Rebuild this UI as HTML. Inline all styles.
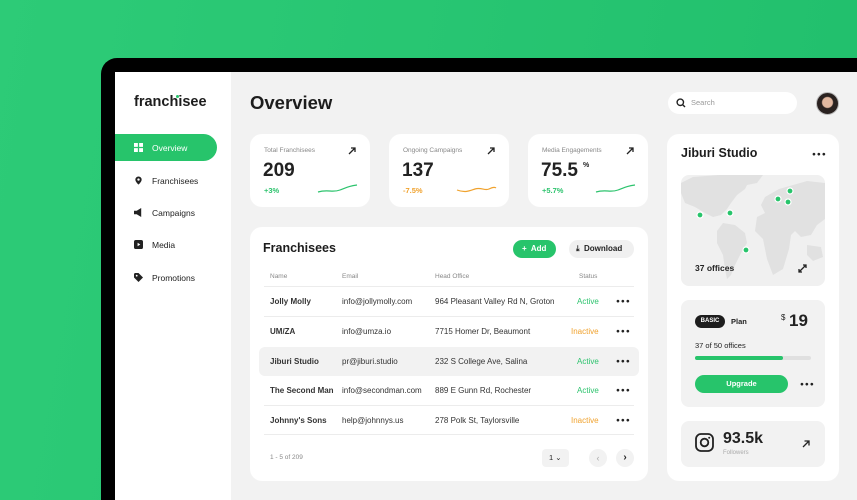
<!DOCTYPE html>
<html><head><meta charset="utf-8"><style>
*{margin:0;padding:0;box-sizing:border-box}
html,body{width:857px;height:500px;overflow:hidden}
body{background:linear-gradient(100deg,#2dcb77,#21bf6c);font-family:"Liberation Sans",sans-serif;position:relative;color:#222}
.abs{position:absolute}
.dev{left:101px;top:58px;width:800px;height:442px;background:#000;border-radius:16px 16px 0 0}
.scr{left:115px;top:72px;width:742px;height:428px;background:#f2f2f2}
.side{left:115px;top:72px;width:116px;height:428px;background:#fff}
.card{background:#fff;border-radius:12px}
.nav{left:115px;width:102px;height:27px;font-size:8.5px;display:flex;align-items:center;padding-left:19px;color:#222}
.nav .ic{width:9px;height:9px;margin-right:9px;display:inline-block}
.lab{font-size:6.5px;color:#888}
.big{font-size:19px;font-weight:bold;color:#222}
.row{left:259px;width:380px;height:29px;font-size:8px;display:flex;align-items:center;color:#333}
.row span{position:absolute}
.dots{font-weight:bold;font-size:6.5px;letter-spacing:1px;color:#222}
.g{color:#2cc36d}.o{color:#f0a22e}
.line{left:264px;width:370px;height:1px;background:#ececec}
</style></head><body>
<div class="abs dev"></div>
<div class="abs scr"></div>
<div class="abs side"></div>
<div class="abs" style="left:134px;top:94px;font-size:14.5px;font-weight:bold;color:#1d1d1d">franchisee</div>
<div class="abs" style="left:176px;top:95px;width:3px;height:3px;border-radius:50%;background:#27c46b"></div>
<div class="abs nav" style="top:134px;background:#27c46b;border-radius:0 14px 14px 0;color:#fff"><svg class="ic" viewBox="0 0 10 10"><rect width="4.3" height="4.3" fill="#fff"/><rect x="5.7" width="4.3" height="4.3" fill="#fff"/><rect y="5.7" width="4.3" height="4.3" fill="#fff"/><rect x="5.7" y="5.7" width="4.3" height="4.3" fill="#fff"/></svg>Overview</div>
<div class="abs nav" style="top:167px"><svg class="ic" viewBox="0 0 10 10"><path d="M5 0.5a3.5 3.5 0 0 1 3.5 3.5c0 2.5-3.5 5.5-3.5 5.5S1.5 6.5 1.5 4A3.5 3.5 0 0 1 5 .5z" fill="#222"/><circle cx="5" cy="4" r="1.3" fill="#fff"/></svg>Franchisees</div>
<div class="abs nav" style="top:199px"><svg class="ic" viewBox="0 0 10 10"><path d="M0 3h3l5-3v10L3 7H0z" fill="#222"/></svg>Campaigns</div>
<div class="abs nav" style="top:231px"><svg class="ic" viewBox="0 0 10 10"><rect width="10" height="10" rx="2" fill="#222"/><path d="M4 3l3 2-3 2z" fill="#fff"/></svg>Media</div>
<div class="abs nav" style="top:264px"><svg class="ic" viewBox="0 0 10 10"><path d="M0 1v4l5 5 5-5-5-5H1z" fill="#222"/><circle cx="3" cy="3" r="1" fill="#fff"/></svg>Promotions</div>

<div class="abs" style="left:250px;top:92px;font-size:18.5px;font-weight:bold;color:#1d1d1d">Overview</div>

<div class="abs" style="left:668px;top:92px;width:129px;height:22px;background:#fff;border-radius:11px"></div>
<svg class="abs" style="left:676px;top:98px" width="10" height="10" viewBox="0 0 10 10"><circle cx="4.3" cy="4.3" r="3.2" fill="none" stroke="#222" stroke-width="1.4"/><path d="M6.6 6.6L9 9" stroke="#222" stroke-width="1.4"/></svg>
<div class="abs" style="left:691px;top:98px;font-size:7.5px;color:#999">Search</div>
<div class="abs" style="left:816px;top:92px;width:23px;height:23px;border-radius:50%;background:radial-gradient(circle at 50% 45%,#e2b8a0 0 5px,#2a2220 6px);border:1px solid #bbb"></div>

<div class="abs card" style="left:250px;top:134px;width:120px;height:73px"></div>
<div class="abs card" style="left:389px;top:134px;width:120px;height:73px"></div>
<div class="abs card" style="left:528px;top:134px;width:120px;height:73px"></div>
<div class="abs lab" style="left:264px;top:147px">Total Franchisees</div>
<div class="abs lab" style="left:403px;top:147px">Ongoing Campaigns</div>
<div class="abs lab" style="left:542px;top:147px">Media Engagements</div>
<div class="abs big" style="left:263px;top:160px">209</div>
<div class="abs big" style="left:402px;top:160px">137</div>
<div class="abs big" style="left:541px;top:160px">75.5</div>
<div class="abs" style="left:583px;top:162px;font-size:7px;font-weight:bold">%</div>
<div class="abs g" style="left:264px;top:186px;font-size:7.5px;font-weight:bold">+3%</div>
<div class="abs o" style="left:403px;top:186px;font-size:7.5px;font-weight:bold">-7.5%</div>
<div class="abs g" style="left:542px;top:186px;font-size:7.5px;font-weight:bold">+5.7%</div>
<svg class="abs" style="left:0;top:0" width="857" height="500">
<g stroke="#222" stroke-width="1.3" fill="none"><path d="M349 154l6-6M351 148h4v4"/><path d="M488 154l6-6M490 148h4v4"/><path d="M627 154l6-6M629 148h4v4"/></g>
<path d="M318 192c10-3 14 1 22-2s10-4 17-5" stroke="#2cc36d" stroke-width="1.2" fill="none"/>
<path d="M457 190c8 3 12 1 18-1s10 2 14 0 6-2 7-1" stroke="#f0a22e" stroke-width="1.2" fill="none"/>
<path d="M596 192c10-3 14 1 22-2s10-4 17-5" stroke="#2cc36d" stroke-width="1.2" fill="none"/>
</svg>

<div class="abs card" style="left:250px;top:227px;width:398px;height:254px"></div>
<div class="abs" style="left:263px;top:241px;font-size:12.5px;font-weight:bold;color:#1d1d1d">Franchisees</div>
<div class="abs" style="left:513px;top:240px;width:43px;height:18px;border-radius:9px;background:#27c46b;color:#fff;font-size:8px;font-weight:bold;line-height:18px;padding-left:9px">+&nbsp; Add</div>
<div class="abs" style="left:569px;top:240px;width:65px;height:18px;border-radius:9px;background:#f0f0f0;font-size:8px;font-weight:bold;line-height:18px;padding-left:7px">⤓&nbsp; Download</div>
<div class="abs lab" style="left:270px;top:273px">Name</div>
<div class="abs lab" style="left:342px;top:273px">Email</div>
<div class="abs lab" style="left:435px;top:273px">Head Office</div>
<div class="abs lab" style="left:579px;top:273px">Status</div>
<div class="abs line" style="top:286px"></div>
<div class="abs line" style="top:316px"></div>
<div class="abs line" style="top:405px"></div>
<div class="abs line" style="top:434px"></div>
<div class="abs" style="left:259px;top:347px;width:380px;height:29px;background:#f2f2f2;border-radius:6px"></div>
<div class="abs row" style="top:287px"><span style="left:11px;font-weight:bold">Jolly Molly</span><span style="left:83px">info@jollymolly.com</span><span style="left:176px">964 Pleasant Valley Rd N, Groton</span><span class="g" style="left:318px">Active</span><span class="dots" style="left:357px">●●●</span></div>
<div class="abs row" style="top:317px"><span style="left:11px;font-weight:bold">UM/ZA</span><span style="left:83px">info@umza.io</span><span style="left:176px">7715 Homer Dr, Beaumont</span><span class="o" style="left:312px">Inactive</span><span class="dots" style="left:357px">●●●</span></div>
<div class="abs row" style="top:347px"><span style="left:11px;font-weight:bold">Jiburi Studio</span><span style="left:83px">pr@jiburi.studio</span><span style="left:176px">232 S College Ave, Salina</span><span class="g" style="left:318px">Active</span><span class="dots" style="left:357px">●●●</span></div>
<div class="abs row" style="top:376px"><span style="left:11px;font-weight:bold">The Second Man</span><span style="left:83px">info@secondman.com</span><span style="left:176px">889 E Gunn Rd, Rochester</span><span class="g" style="left:318px">Active</span><span class="dots" style="left:357px">●●●</span></div>
<div class="abs row" style="top:406px"><span style="left:11px;font-weight:bold">Johnny's Sons</span><span style="left:83px">help@johnnys.us</span><span style="left:176px">278 Polk St, Taylorsville</span><span class="o" style="left:312px">Inactive</span><span class="dots" style="left:357px">●●●</span></div>
<div class="abs lab" style="left:270px;top:454px">1 - 5 of 209</div>
<div class="abs" style="left:542px;top:449px;width:27px;height:18px;border-radius:4px;background:#f2f2f2;font-size:7.5px;line-height:18px;padding-left:7px">1 ⌄</div>
<div class="abs" style="left:589px;top:449px;width:18px;height:18px;border-radius:50%;background:#f2f2f2;color:#aaa;font-size:9px;line-height:18px;text-align:center">‹</div>
<div class="abs" style="left:616px;top:449px;width:18px;height:18px;border-radius:50%;background:#f2f2f2;color:#222;font-size:10px;font-weight:bold;line-height:17px;text-align:center">›</div>

<div class="abs card" style="left:667px;top:134px;width:172px;height:347px"></div>
<div class="abs" style="left:681px;top:146px;font-size:12.5px;font-weight:bold;color:#1d1d1d">Jiburi Studio</div>
<div class="abs dots" style="left:812px;top:151px">●●●</div>
<div class="abs" style="left:681px;top:175px;width:144px;height:111px;background:#f0f0f0;border-radius:8px;overflow:hidden">
<svg width="144" height="111" viewBox="0 0 144 111"><g fill="#e1e1e1"><path d="M0 8l12-6 26-2 22 0 8 6-4 8-8 6-6 8-4 6-6 6-8 2-8-4-10-6-10-4-4-10z"/><path d="M60 0h22l-6 8-10 2z"/><path d="M42 48l12 2 10 8 2 10-6 10-6 12-4 10-4 4-2-10-2-14-6-12 0-12z"/><path d="M84 22l14-8 28-8 18 2v36l-8 6-6 10-10 2-6-6-4 4-2 14-6 20-10 6-6-16-4-20-8-8 2-14 8-4-4-8z"/><path d="M126 70l14 2 2 10-10 4-6-6z"/></g>
<g fill="#27c46b" stroke="#fff" stroke-width="1.2"><circle cx="19" cy="40" r="3"/><circle cx="49" cy="38" r="3"/><circle cx="65" cy="75" r="3"/><circle cx="97" cy="24" r="3"/><circle cx="109" cy="16" r="3"/><circle cx="107" cy="27" r="3"/></g></svg></div>
<div class="abs" style="left:695px;top:263px;font-size:8.5px;font-weight:bold">37 offices</div>
<svg class="abs" style="left:798px;top:264px" width="9" height="9" viewBox="0 0 9 9"><path d="M1 8L8 1M5 1h3v3M1 5v3h3" stroke="#222" stroke-width="1.3" fill="none"/></svg>

<div class="abs" style="left:681px;top:300px;width:144px;height:107px;background:#f2f2f2;border-radius:8px"></div>
<div class="abs" style="left:695px;top:315px;width:30px;height:13px;border-radius:7px;background:#1d1d1d;color:#fff;font-size:6px;font-weight:bold;line-height:13px;text-align:center">BASIC</div>
<div class="abs" style="left:731px;top:317px;font-size:7.5px;font-weight:bold">Plan</div>
<div class="abs" style="left:781px;top:313px;font-size:8px">$</div>
<div class="abs" style="left:789px;top:311px;font-size:17px;font-weight:bold">19</div>
<div class="abs" style="left:695px;top:341px;font-size:7.5px">37 of 50 offices</div>
<div class="abs" style="left:695px;top:356px;width:116px;height:4px;border-radius:2px;background:#e0e0e0"></div>
<div class="abs" style="left:695px;top:356px;width:88px;height:4px;border-radius:2px;background:#27c46b"></div>
<div class="abs" style="left:695px;top:375px;width:93px;height:18px;border-radius:9px;background:#27c46b;color:#fff;font-size:7.5px;font-weight:bold;line-height:18px;text-align:center">Upgrade</div>
<div class="abs dots" style="left:800px;top:381px">●●●</div>

<div class="abs" style="left:681px;top:421px;width:144px;height:46px;background:#f2f2f2;border-radius:8px"></div>
<svg class="abs" style="left:695px;top:433px" width="19" height="19" viewBox="0 0 19 19"><rect x="1" y="1" width="17" height="17" rx="5" fill="none" stroke="#222" stroke-width="1.8"/><circle cx="9.5" cy="9.5" r="3.8" fill="none" stroke="#222" stroke-width="1.8"/><circle cx="14.2" cy="4.8" r="1" fill="#222"/></svg>
<div class="abs" style="left:723px;top:430px;font-size:16px;font-weight:bold">93.5k</div>
<div class="abs" style="left:723px;top:450px;font-size:6px;color:#aaa">Followers</div>
<svg class="abs" style="left:802px;top:440px" width="8" height="8" viewBox="0 0 8 8"><path d="M1 7l6-6M2.5 1H7v4.5" stroke="#222" stroke-width="1.3" fill="none"/></svg>
</body></html>
